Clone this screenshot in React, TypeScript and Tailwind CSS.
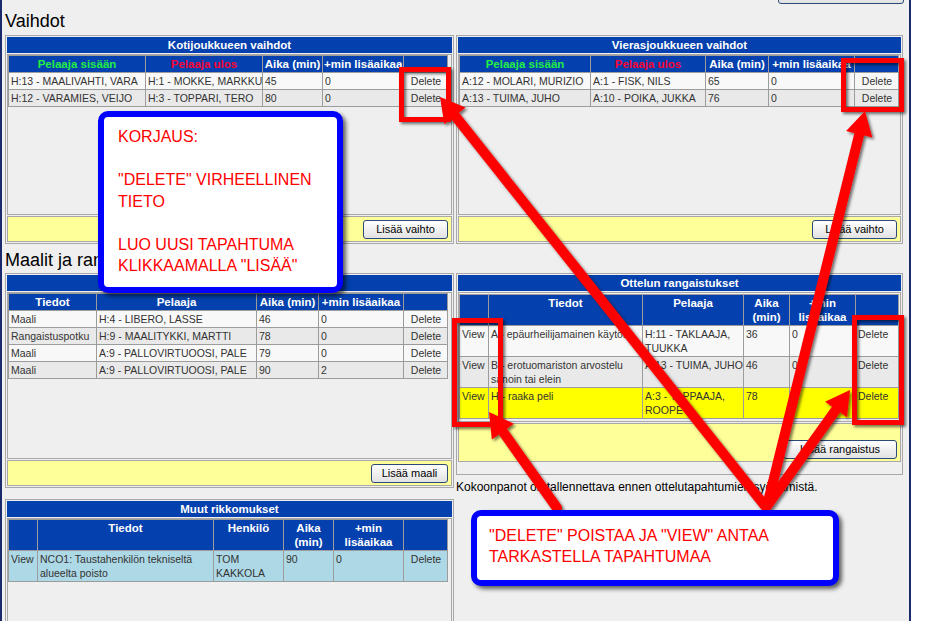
import React from "react";

type Cell = { c: React.ReactNode; cls?: string };
type Row = { bg: string; cells: Cell[] };

const TH =
  "border border-[#9c9c9c] bg-[#0441ae] font-bold text-[11.5px] leading-[14px] px-px py-px align-top text-center";
const TD =
  "border border-[#9c9c9c] text-[10.5px] leading-[14px] pl-[2px] pr-px py-px align-top text-[#333]";

const L = "bg-[#f8f8f8]";
const G = "bg-[#e9e9e9]";

function DataTable({
  cols,
  heads,
  rows,
  width,
}: {
  cols: string[];
  heads: Cell[];
  rows: Row[];
  width: string;
}) {
  return (
    <table className={`table-fixed border-collapse ${width}`}>
      <colgroup>
        {cols.map((c, i) => (
          <col key={i} className={c} />
        ))}
      </colgroup>
      <thead>
        <tr>
          {heads.map((h, i) => (
            <th key={i} className={`${TH} ${h.cls ?? "text-white"}`}>
              {h.c}
            </th>
          ))}
        </tr>
      </thead>
      <tbody>
        {rows.map((r, i) => (
          <tr key={i} className={r.bg}>
            {r.cells.map((c, j) => (
              <td key={j} className={`${TD} ${c.cls ?? ""}`}>
                {c.c}
              </td>
            ))}
          </tr>
        ))}
      </tbody>
    </table>
  );
}

function Btn({ children, w }: { children: React.ReactNode; w: string }) {
  return (
    <div
      className={`${w} h-[19px] border border-[#2b4a7a] rounded-[3px] bg-linear-to-b from-white to-[#e2e2e2] text-[11px] leading-[17px] text-center text-black`}
    >
      {children}
    </div>
  );
}

function Panel({
  title,
  h,
  children,
  footer,
}: {
  title: string;
  h: string;
  children: React.ReactNode;
  footer?: React.ReactNode;
}) {
  return (
    <div className={`${h} flex flex-col gap-px p-px border border-[#a8a8a8] bg-[#efefef]`}>
      <div className="h-[16px] shrink-0 bg-[#0441ae] text-white font-bold text-[11.5px] leading-[16px] text-center">
        {title}
      </div>
      <div className="flex-1 min-h-0 border border-[#a8a8a8] overflow-hidden">{children}</div>
      {footer}
    </div>
  );
}

function Footer({ children }: { children: React.ReactNode }) {
  return (
    <div className="h-[26px] shrink-0 border border-[#a8a8a8] bg-[#ffff99] flex items-center justify-end pr-[3px]">
      {children}
    </div>
  );
}

const del: Cell = { c: "Delete", cls: "text-center" };
const view: Cell = { c: "View" };

function arrow(tail: [number, number], tip: [number, number], key: string) {
  const headL = 24;
  const headW = 27;
  const dx = tip[0] - tail[0];
  const dy = tip[1] - tail[1];
  const len = Math.hypot(dx, dy);
  const ux = dx / len;
  const uy = dy / len;
  const px = -uy;
  const py = ux;
  const bx = tip[0] - ux * headL;
  const by = tip[1] - uy * headL;
  return (
    <g key={key}>
      <line
        x1={tail[0]}
        y1={tail[1]}
        x2={bx + ux * 3}
        y2={by + uy * 3}
        stroke="#ff0000"
        strokeWidth={10}
        strokeLinecap="round"
      />
      <polygon
        points={`${tip[0]},${tip[1]} ${bx + (px * headW) / 2},${by + (py * headW) / 2} ${bx - (px * headW) / 2},${by - (py * headW) / 2}`}
        fill="#ff0000"
      />
    </g>
  );
}

const GREEN = "text-[#22ee44] whitespace-nowrap";
const RED = "text-[#ff0033] whitespace-nowrap";
const NW = "text-white whitespace-nowrap";

export default function App() {
  return (
    <div className="relative w-[932px] h-[621px] overflow-hidden bg-white font-['Liberation_Sans',Arial,sans-serif]">
      <div className="w-[911px] h-[621px] border-l-2 border-r-2 border-[#1a2a6c] bg-[#efefef] pl-[3px]">
        {/* top heading */}
        <div className="h-[35px] flex justify-between items-start pr-[5px]">
          <div className="mt-[10px] text-[18px] leading-[22px] text-black">Vaihdot</div>
          <div className="w-[126px] h-[20px] mt-[-16px] border border-[#2b4a7a] rounded-[3px] bg-linear-to-b from-white to-[#e2e2e2]" />
        </div>

        {/* row 1 */}
        <div className="flex gap-[2px]">
          <div className="w-[449px]">
            <Panel
              title="Kotijoukkueen vaihdot"
              h="h-[209px]"
              footer={
                <Footer>
                  <Btn w="w-[85px]">Lisää vaihto</Btn>
                </Footer>
              }
            >
              <DataTable
                width="w-[439px]"
                cols={["w-[137px]", "w-[117px]", "w-[60px]", "w-[81px]", "w-[44px]"]}
                heads={[
                  { c: "Pelaaja sisään", cls: GREEN },
                  { c: "Pelaaja ulos", cls: RED },
                  { c: "Aika (min)", cls: NW },
                  { c: "+min lisäaikaa", cls: NW },
                  { c: "" },
                ]}
                rows={[
                  {
                    bg: L,
                    cells: [
                      { c: "H:13 - MAALIVAHTI, VARA", cls: "whitespace-nowrap" },
                      { c: "H:1 - MOKKE, MARKKU", cls: "whitespace-nowrap" },
                      { c: "45" },
                      { c: "0" },
                      del,
                    ],
                  },
                  {
                    bg: G,
                    cells: [
                      { c: "H:12 - VARAMIES, VEIJO", cls: "whitespace-nowrap" },
                      { c: "H:3 - TOPPARI, TERO", cls: "whitespace-nowrap" },
                      { c: "80" },
                      { c: "0" },
                      del,
                    ],
                  },
                ]}
              />
            </Panel>
          </div>
          <div className="w-[447px]">
            <Panel
              title="Vierasjoukkueen vaihdot"
              h="h-[209px]"
              footer={
                <Footer>
                  <Btn w="w-[85px]">Lisää vaihto</Btn>
                </Footer>
              }
            >
              <DataTable
                width="w-[439px]"
                cols={["w-[131px]", "w-[115px]", "w-[63px]", "w-[86px]", "w-[44px]"]}
                heads={[
                  { c: "Pelaaja sisään", cls: GREEN },
                  { c: "Pelaaja ulos", cls: RED },
                  { c: "Aika (min)", cls: NW },
                  { c: "+min lisäaikaa", cls: NW },
                  { c: "" },
                ]}
                rows={[
                  {
                    bg: L,
                    cells: [
                      { c: "A:12 - MOLARI, MURIZIO", cls: "whitespace-nowrap" },
                      { c: "A:1 - FISK, NILS", cls: "whitespace-nowrap" },
                      { c: "65" },
                      { c: "0" },
                      del,
                    ],
                  },
                  {
                    bg: G,
                    cells: [
                      { c: "A:13 - TUIMA, JUHO", cls: "whitespace-nowrap" },
                      { c: "A:10 - POIKA, JUKKA", cls: "whitespace-nowrap" },
                      { c: "76" },
                      { c: "0" },
                      del,
                    ],
                  },
                ]}
              />
            </Panel>
          </div>
        </div>

        {/* second heading */}
        <div className="mt-[5px] mb-[2px] h-[22px] text-[18px] leading-[22px] text-black">
          Maalit ja rangaistukset
        </div>

        {/* row 2 + 3 */}
        <div className="flex gap-[2px] items-start">
          <div className="w-[449px] flex flex-col">
            <Panel
              title="Ottelun maalit"
              h="h-[215px]"
              footer={
                <Footer>
                  <Btn w="w-[77px]">Lisää maali</Btn>
                </Footer>
              }
            >
              <DataTable
                width="w-[439px]"
                cols={["w-[88px]", "w-[160px]", "w-[62px]", "w-[85px]", "w-[44px]"]}
                heads={[
                  { c: "Tiedot" },
                  { c: "Pelaaja" },
                  { c: "Aika (min)", cls: NW },
                  { c: "+min lisäaikaa", cls: NW },
                  { c: "" },
                ]}
                rows={[
                  { bg: L, cells: [{ c: "Maali" }, { c: "H:4 - LIBERO, LASSE", cls: "whitespace-nowrap" }, { c: "46" }, { c: "0" }, del] },
                  { bg: G, cells: [{ c: "Rangaistuspotku", cls: "whitespace-nowrap" }, { c: "H:9 - MAALITYKKI, MARTTI", cls: "whitespace-nowrap" }, { c: "78" }, { c: "0" }, del] },
                  { bg: L, cells: [{ c: "Maali" }, { c: "A:9 - PALLOVIRTUOOSI, PALE", cls: "whitespace-nowrap" }, { c: "79" }, { c: "0" }, del] },
                  { bg: G, cells: [{ c: "Maali" }, { c: "A:9 - PALLOVIRTUOOSI, PALE", cls: "whitespace-nowrap" }, { c: "90" }, { c: "2" }, del] },
                ]}
              />
            </Panel>

            <div className="mt-[11px]">
              <Panel title="Muut rikkomukset" h="h-[220px]">
                <DataTable
                  width="w-[439px]"
                  cols={["w-[29px]", "w-[176px]", "w-[70px]", "w-[50px]", "w-[70px]", "w-[44px]"]}
                  heads={[
                    { c: "" },
                    { c: "Tiedot" },
                    { c: "Henkilö" },
                    { c: "Aika (min)" },
                    { c: "+min lisäaikaa" },
                    { c: "" },
                  ]}
                  rows={[
                    {
                      bg: "bg-[#add8e6]",
                      cells: [
                        view,
                        { c: "NCO1: Taustahenkilön tekniseltä alueelta poisto" },
                        { c: "TOM KAKKOLA" },
                        { c: "90" },
                        { c: "0" },
                        del,
                      ],
                    },
                  ]}
                />
              </Panel>
            </div>
          </div>

          <div className="w-[447px] flex flex-col">
            <div className="h-[202px] flex flex-col gap-px p-px border border-[#a8a8a8] bg-[#efefef]">
              <div className="h-[16px] shrink-0 bg-[#0441ae] text-white font-bold text-[11.5px] leading-[16px] text-center">
                Ottelun rangaistukset
              </div>
              <div className="flex-1 min-h-0 border border-[#a8a8a8] overflow-hidden pt-px">
                <DataTable
                  width="w-[439px]"
                  cols={["w-[29px]", "w-[154px]", "w-[101px]", "w-[46px]", "w-[66px]", "w-[43px]"]}
                  heads={[
                    { c: "" },
                    { c: "Tiedot" },
                    { c: "Pelaaja" },
                    { c: "Aika (min)" },
                    { c: "+min lisäaikaa" },
                    { c: "" },
                  ]}
                  rows={[
                    {
                      bg: L,
                      cells: [
                        view,
                        { c: "A - epäurheilijamainen käytös" },
                        { c: "H:11 - TAKLAAJA, TUUKKA" },
                        { c: "36" },
                        { c: "0" },
                        { c: "Delete" },
                      ],
                    },
                    {
                      bg: G,
                      cells: [
                        view,
                        { c: "B - erotuomariston arvostelu sanoin tai elein" },
                        { c: "A:13 - TUIMA, JUHO", cls: "whitespace-nowrap" },
                        { c: "46" },
                        { c: "0" },
                        { c: "Delete" },
                      ],
                    },
                    {
                      bg: "bg-[#ffff00]",
                      cells: [
                        view,
                        { c: "H - raaka peli" },
                        { c: "A:3 - TAPPAAJA, ROOPE" },
                        { c: "78" },
                        { c: "0" },
                        { c: "Delete" },
                      ],
                    },
                  ]}
                />
              </div>
              <div className="h-[39px] shrink-0 border border-[#a8a8a8] bg-[#ffff99] flex items-end justify-end pr-[3px] pb-[2px]">
                <Btn w="w-[114px]">Lisää rangaistus</Btn>
              </div>
              <div className="h-[10px] shrink-0" />
            </div>
            <div className="mt-[5px] text-[12px] leading-[14px] text-black whitespace-nowrap">
              Kokoonpanot on tallennettava ennen ottelutapahtumien syöttämistä.
            </div>
          </div>
        </div>
      </div>

      {/* annotations: red frames and arrows */}
      <svg className="absolute left-0 top-0 pointer-events-none" width={932} height={621}>
        <defs>
          <filter id="sh" x="-20%" y="-20%" width="140%" height="140%">
            <feDropShadow dx="2" dy="2" stdDeviation="1.6" floodColor="#000" floodOpacity="0.55" />
          </filter>
        </defs>
        <g filter="url(#sh)">
          <rect x={401.5} y={69.5} width={47} height={50} fill="none" stroke="#ff0000" strokeWidth={5} />
          <rect x={843.5} y={60.5} width={58} height={49} fill="none" stroke="#ff0000" strokeWidth={5} />
          <rect x={454.5} y={320.5} width={46} height={104} fill="none" stroke="#ff0000" strokeWidth={5} />
          <rect x={854.5} y={317.5} width={47} height={105} fill="none" stroke="#ff0000" strokeWidth={5} />
          {arrow([765, 506], [440, 97], "a1")}
          {arrow([767, 506], [865, 111], "a2")}
          {arrow([557, 508], [489, 412], "a3")}
          {arrow([767, 506], [850, 390], "a4")}
        </g>
      </svg>

      {/* callout 1 */}
      <div className="absolute left-[98px] top-[111px] w-[245px] h-[182px] border-[6px] border-[#0000ff] rounded-[10px] bg-white shadow-[3px_3px_4px_rgba(0,0,0,0.6)] pl-[14px] pt-[9px] text-[#ff0000] text-[16px] leading-[21.5px] whitespace-nowrap">
        <div>KORJAUS:</div>
        <div className="h-[21.5px]" />
        <div>"DELETE" VIRHEELLINEN</div>
        <div>TIETO</div>
        <div className="h-[21.5px]" />
        <div>LUO UUSI TAPAHTUMA</div>
        <div>KLIKKAAMALLA "LISÄÄ"</div>
      </div>

      {/* callout 2 */}
      <div className="absolute left-[471px] top-[510px] w-[368px] h-[76px] border-[6px] border-[#0000ff] rounded-[10px] bg-white shadow-[3px_3px_4px_rgba(0,0,0,0.6)] pl-[12px] pt-[9px] text-[#ff0000] text-[16px] leading-[21px] whitespace-nowrap">
        <div>"DELETE" POISTAA JA "VIEW" ANTAA</div>
        <div>TARKASTELLA TAPAHTUMAA</div>
      </div>
    </div>
  );
}
